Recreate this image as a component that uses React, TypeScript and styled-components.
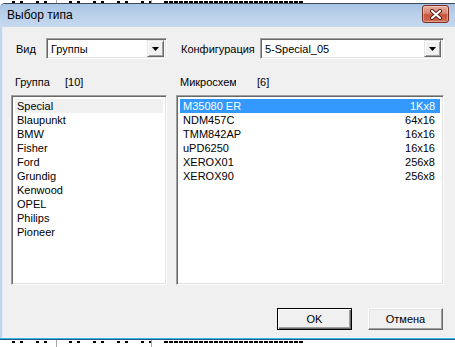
import React from 'react';
import styled, { createGlobalStyle } from 'styled-components';

const GlobalStyle = createGlobalStyle`
  html, body {
    margin: 0;
    padding: 0;
    background: #fff;
  }
  * {
    box-sizing: border-box;
  }
`;

interface Chip {
  name: string;
  size: string;
}

const groups = ['Special', 'Blaupunkt', 'BMW', 'Fisher', 'Ford', 'Grundig', 'Kenwood', 'OPEL', 'Philips', 'Pioneer'];

const chips: Chip[] = [
  { name: 'M35080 ER', size: '1Kx8' },
  { name: 'NDM457C', size: '64x16' },
  { name: 'TMM842AP', size: '16x16' },
  { name: 'uPD6250', size: '16x16' },
  { name: 'XEROX01', size: '256x8' },
  { name: 'XEROX90', size: '256x8' }
];

const ComboArrow = () => (
  <svg width="7" height="4" viewBox="0 0 7 4">
    <path d="M0 0 H7 L3.5 4 Z" fill="#000" />
  </svg>
);

const CloseGlyph = () => (
  <svg width="14" height="11" viewBox="0 0 14 11">
    <path d="M3 2 L11 9 M11 2 L3 9" stroke="#5a1a12" strokeWidth="4" strokeLinecap="round" />
    <path d="M3 2 L11 9 M11 2 L3 9" stroke="#fff" strokeWidth="2.2" strokeLinecap="round" />
  </svg>
);

const App: React.FC = () => {
  return (
    <Page>
      <GlobalStyle />
      <Strip $height={3}>
        <TickCell $width={57} $divider />
        <TickCell $width={95} $divider />
        <Gap $width={12} />
        <DenseCell $width={140} />
      </Strip>

      <Window>
        <TitleBar>
          <Title>Выбор типа</Title>
          <CloseButton>
            <CloseGlyph />
          </CloseButton>
        </TitleBar>

        <Client>
          <Columns>
            <FieldRow>
              <FieldLabel>Вид</FieldLabel>
              <Combo $width={121}>
                <ComboText>Группы</ComboText>
                <ComboButton>
                  <ComboArrow />
                </ComboButton>
              </Combo>
            </FieldRow>
            <FieldRow>
              <FieldLabel>Конфигурация</FieldLabel>
              <Combo $width={184}>
                <ComboText>5-Special_05</ComboText>
                <ComboButton>
                  <ComboArrow />
                </ComboButton>
              </Combo>
            </FieldRow>

            <CaptionRow>
              <Caption $width={50} $clip={50}>Группа</Caption>
              <Count>[10]</Count>
            </CaptionRow>
            <CaptionRow>
              <Caption $width={77} $clip={56}>Микросхемы</Caption>
              <Count>[6]</Count>
            </CaptionRow>

            <ListBox>
              {groups.map((group, i) => (
                <ListRow key={group} $state={i === 0 ? 'inactive' : 'none'}>
                  <span>{group}</span>
                </ListRow>
              ))}
            </ListBox>
            <ListBox>
              {chips.map((chip, i) => (
                <ListRow key={chip.name} $state={i === 0 ? 'active' : 'none'} $wide>
                  <span>{chip.name}</span>
                  <span>{chip.size}</span>
                </ListRow>
              ))}
            </ListBox>
          </Columns>

          <ButtonBar>
            <DialogButton type="button" $default>OK</DialogButton>
            <DialogButton type="button">Отмена</DialogButton>
          </ButtonBar>
        </Client>
      </Window>

      <TaskEdge />
      <Strip $height={7}>
        <TickCell $width={57} $divider />
        <TickCell $width={95} $divider />
        <Gap $width={12} />
        <DenseCell $width={140} />
      </Strip>
    </Page>
  );
};

const Page = styled.div`
  width: 455px;
  height: 347px;
  overflow: hidden;
  display: flex;
  flex-direction: column;
  background: #fff;
  font-family: "Liberation Sans", Arial, sans-serif;
  font-size: 11px;
  color: #000;
`;

const Strip = styled.div<{ $height: number }>`
  height: ${({ $height }) => $height}px;
  flex: none;
  display: flex;
  background: #fff;
`;

const TickCell = styled.div<{ $width: number; $divider?: boolean }>`
  width: ${({ $width }) => $width}px;
  height: 100%;
  border-right: ${({ $divider }) => ($divider ? '1px solid #a8a8a8' : 'none')};
  background-image: repeating-linear-gradient(
    90deg,
    transparent 0 12px,
    #000 12px 15px,
    transparent 15px 20px,
    #000 20px 23px,
    transparent 23px 24px
  );
  background-size: 100% 2px;
  background-repeat: no-repeat;
  background-position: 0 1px;
`;

const Gap = styled.div<{ $width: number }>`
  width: ${({ $width }) => $width}px;
`;

const DenseCell = styled.div<{ $width: number }>`
  width: ${({ $width }) => $width}px;
  height: 100%;
  background-image: repeating-linear-gradient(90deg, #000 0 4px, transparent 4px 5px);
  background-size: 100% 2px;
  background-repeat: no-repeat;
  background-position: 0 1px;
`;

const Window = styled.div`
  flex: none;
  display: flex;
  flex-direction: column;
  border-top: 1px solid #3d4a5a;
  border-top-left-radius: 5px;
  background: #c2d5ed;
  overflow: hidden;
`;

const TitleBar = styled.div`
  height: 23px;
  display: flex;
  justify-content: space-between;
  align-items: flex-start;
  background: linear-gradient(to bottom, #a9c4e4 0%, #b9d0ea 45%, #c6d9ef 100%);
`;

const Title = styled.span`
  padding-left: 7px;
  line-height: 22px;
  font-size: 12px;
  color: #000;
`;

const CloseButton = styled.div`
  width: 27px;
  height: 18px;
  margin: 1px 6px 0 0;
  display: flex;
  align-items: center;
  justify-content: center;
  border: 1px solid #7a2b22;
  border-radius: 3px;
  background: linear-gradient(to bottom, #e6ad9d 0%, #d88670 45%, #c8553c 55%, #d06c52 100%);
  box-shadow: inset 0 0 0 1px rgba(255, 255, 255, 0.35);
`;

const Client = styled.div`
  height: 311px;
  margin-left: 2px;
  border-left: 1px solid #e2eaf5;
  background: #f0f0f0;
  padding: 11px 11px 8px 8px;
  display: flex;
  flex-direction: column;
`;

const Columns = styled.div`
  display: grid;
  grid-template-columns: 156px 268px;
  grid-template-rows: 21px 14px 190px;
  column-gap: 9px;

  & > :nth-child(3),
  & > :nth-child(4) {
    margin-top: 16px;
  }

  & > :nth-child(5),
  & > :nth-child(6) {
    margin-top: 22px;
  }
`;

const FieldRow = styled.div`
  display: flex;
  align-items: center;
  justify-content: space-between;
  padding-left: 5px;
`;

const FieldLabel = styled.span`
  line-height: 14px;
`;

const Combo = styled.div<{ $width: number }>`
  width: ${({ $width }) => $width}px;
  height: 21px;
  display: flex;
  align-items: center;
  background: #fff;
  border: 1px solid;
  border-color: #a0a0a0 #fff #fff #a0a0a0;
  box-shadow: inset 1px 1px 0 #696969, inset -1px -1px 0 #e3e3e3;
  padding: 2px 2px 2px 4px;
`;

const ComboText = styled.span`
  flex: 1;
  line-height: 15px;
  padding-top: 1px;
`;

const ComboButton = styled.div`
  width: 17px;
  height: 17px;
  display: flex;
  align-items: center;
  justify-content: center;
  background: #f0f0f0;
  border: 1px solid;
  border-color: #e3e3e3 #696969 #696969 #e3e3e3;
  box-shadow: inset 1px 1px 0 #fff, inset -1px -1px 0 #a0a0a0;
`;

const CaptionRow = styled.div`
  display: flex;
  height: 14px;
  line-height: 14px;
  padding-left: 4px;
`;

const Caption = styled.span<{ $width: number; $clip: number }>`
  width: ${({ $width }) => $width}px;
  padding-right: ${({ $width, $clip }) => $width - $clip}px;
  overflow: hidden;
  white-space: nowrap;
  clip-path: inset(0 ${({ $width, $clip }) => $width - $clip}px 0 0);
`;

const Count = styled.span`
  padding-left: 0;
`;

const ListBox = styled.div`
  height: 190px;
  background: #fff;
  border: 1px solid;
  border-color: #a0a0a0 #fff #fff #a0a0a0;
  box-shadow: inset 1px 1px 0 #696969, inset -1px -1px 0 #e3e3e3;
  padding: 3px 3px 2px;
  overflow: hidden;
`;

type RowState = 'none' | 'inactive' | 'active';

const ListRow = styled.div<{ $state: RowState; $wide?: boolean }>`
  height: 14px;
  line-height: 14px;
  display: flex;
  justify-content: space-between;
  padding: 0 ${({ $wide }) => ($wide ? '5px' : '2px')} 0 ${({ $wide }) => ($wide ? '3px' : '2px')};
  white-space: nowrap;
  background: ${({ $state }) =>
    $state === 'active' ? '#3399ff' :
      $state === 'inactive' ? '#f0f0f0' :
        'transparent'};
  color: ${({ $state }) => ($state === 'active' ? '#fff' : '#000')};
`;

const ButtonBar = styled.div`
  margin-top: auto;
  display: flex;
  justify-content: flex-end;
  gap: 16px;
  padding-right: 1px;
`;

const DialogButton = styled.button<{ $default?: boolean }>`
  width: 75px;
  height: 22px;
  padding: 0;
  font-family: inherit;
  font-size: 11px;
  color: #000;
  background: #f0f0f0;
  border: 1px solid;
  border-color: ${({ $default }) => ($default ? '#000' : '#fff #696969 #696969 #fff')};
  box-shadow: ${({ $default }) =>
    $default
      ? 'inset 1px 1px 0 #fff, inset -1px -1px 0 #696969, inset -2px -2px 0 #a0a0a0'
      : 'inset -1px -1px 0 #a0a0a0, inset 1px 1px 0 #e3e3e3'};
`;

const TaskEdge = styled.div`
  height: 2px;
  flex: none;
  border-top: 1px solid #36b4e8;
  border-bottom: 1px solid #1f5f86;
`;

export default App;
